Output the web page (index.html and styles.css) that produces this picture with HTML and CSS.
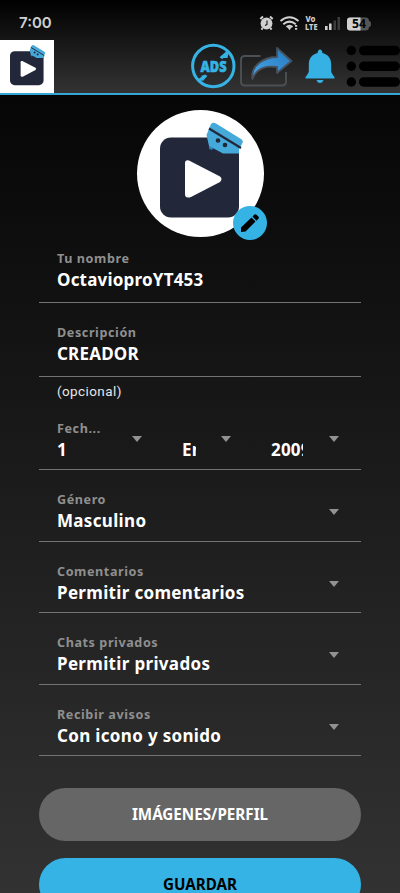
FILE: index.html
```html
<!DOCTYPE html>
<html lang="es">
<head>
<meta charset="utf-8">
<meta name="viewport" content="width=device-width, initial-scale=1">
<title>Perfil</title>
<link rel="stylesheet" href="styles.css">
</head>
<body>
<svg class="defs" aria-hidden="true">
  <symbol id="logo" viewBox="0 0 80 94" overflow="visible">
    <rect x="0" y="14.500" width="79" height="80" rx="11" fill="#22273a"/>
    <path d="M25 40.500Q25 36.500 29 37.500L60 53.500Q63 56 60 59L31 74Q25 76 25 71Z" fill="#fff"/>
    <path d="M49 21v5l3 1 2-3z" fill="#2481b5"/>
    <path d="M51 1Q53-1 56 .5L81 16Q84 18 82 21L79 26V30.500H63L49 23 46.500 12Z" fill="#45a9da"/>
    <path d="M49 5.500L81 25" stroke="#22273a" stroke-width="2.200"/>
    <circle cx="58" cy="17.500" r="2.300" fill="#22273a"/><circle cx="65" cy="22" r="2.300" fill="#22273a"/>
  </symbol>
</svg>
<header class="top">
  <div class="status">
    <span class="time">7:00</span>
    <svg class="status-icons" width="114" height="20" viewBox="0 0 114 20">
      <circle cx="8.500" cy="10.500" r="5.900" fill="#d0d0d0"/>
      <path d="M9 7.500v4l-2 1" stroke="#111" stroke-width="1.100" fill="none"/>
      <g fill="none" stroke="#d0d0d0">
        <path d="M2.300 6l2.700-2.500M14.700 6L12 3.500M4.500 15l-1 1.600M12.500 15l1 1.600" stroke-width="2"/>
        <path d="M22.500 8Q31.500 .5 40.500 8M25.300 11.200Q31.500 6 37.700 11.200M28.500 14Q31.500 11.500 34.500 14" stroke-width="2"/>
      </g>
      <path d="M29.300 14h4.400l-2.200 3.200zM37 12h2.200v1.800H37zM37 15h2.200v1.800H37z" fill="#d0d0d0"/>
      <g font-family="Noto Sans" font-weight="800" font-size="8.500" fill="#d0d0d0"><text x="47.500" y="9.300" textLength="10" lengthAdjust="spacingAndGlyphs">Vo</text><text x="47" y="17" textLength="12.500" lengthAdjust="spacingAndGlyphs">LTE</text></g>
      <path d="M67 13h2.600v4H67zM71 10.500h2.600V17H71z" fill="#d0d0d0"/>
      <path d="M75.500 7.500H78V17h-2.500zM79.500 4H82v13h-2.500z" fill="#3c3c3c"/>
      <rect x="89" y="4.500" width="22" height="13" rx="3.500" fill="#555"/><path d="M111 8q2 0 2 3t-2 3z" fill="#555"/>
      <path d="M92 4.500h10.500v13H92q-3 0-3-3v-7q0-3 3-3z" fill="#d0d0d0"/>
      <text x="94" y="15" font-family="Noto Sans" font-weight="700" font-size="11.500" textLength="14" lengthAdjust="spacingAndGlyphs" fill="#050505">54</text>
    </svg>
  </div>
  <nav class="bar">
    <div class="brand"><svg width="34" height="40"><use href="#logo"/></svg></div>
    <svg class="tools" width="210" height="53" viewBox="190 40 210 53">
      <defs><linearGradient id="arrow" x1="0" y1="1" x2="1" y2="0"><stop stop-color="#4ba4e8"/><stop offset="1" stop-color="#2379bd"/></linearGradient></defs>
      <circle cx="213.300" cy="66" r="20.700" fill="none" stroke="#35b3e5" stroke-width="3"/>
      <path d="M199 80.500l7-5M221 58l7-6" stroke="#35b3e5" stroke-width="3"/>
      <path d="M201.500 75.500h6l-5 6zM219.500 58l5-4.500h4l-1 4.500z" fill="#35b3e5"/>
      <text x="200.500" y="71.500" font-family="Noto Sans" font-weight="900" font-size="15" textLength="26" lengthAdjust="spacingAndGlyphs" fill="#35b3e5" stroke="#35b3e5" stroke-width=".6">ADS</text>
      <path d="M260.500 56H245q-4 0-4 4v21.500q0 4 4 4h37q4 0 4-4V72" fill="none" stroke="#4b5055" stroke-width="1.900"/>
      <path d="M252.500 79C250 65 265 57 277 57V48L291.500 61 277 73V67C267 66 257 67 252.500 79Z" fill="url(#arrow)" stroke="#46515d" stroke-width="1.800" stroke-linejoin="round"/>
      <path d="M317.500 53q.5-3.500 2.500-3.500t2.500 3.500c6 1.500 8.700 6 8.700 11.500v6.500q0 2 3.300 6v1.500h-29v-1.500q3.300-4 3.300-6v-6.500c0-5.500 2.700-10 8.700-11.500zM316.500 80h7q-1 3-3.500 3t-3.500-3z" fill="#35b1e4"/>
      <g fill="#000"><circle cx="351.300" cy="50.500" r="4.700"/><circle cx="351.300" cy="66.300" r="4.700"/><circle cx="351.300" cy="82" r="4.700"/><rect x="359" y="45.800" width="41" height="9.500" rx="4.700"/><rect x="359" y="61.500" width="41" height="9.500" rx="4.700"/><rect x="359" y="77.200" width="41" height="9.500" rx="4.700"/></g>
    </svg>
  </nav>
</header>
<main class="page">
  <div class="avatar">
    <svg width="80" height="94"><use href="#logo"/></svg>
    <span class="edit"><svg width="34" height="34" viewBox="0 0 34 34"><path d="M8 21.500L18.500 11.500l4 4L12.500 25.500 8 26zM19.500 10.500l2-2q1-.7 2 .3l2 2q.8 1-.1 1.900l-2 2z"/></svg></span>
  </div>
  <form class="form">
    <div class="field input"><span class="label">Tu nombre</span><span class="value">OctavioproYT453</span></div>
    <div class="field input second"><span class="label">Descripción</span><span class="value">CREADOR</span></div>
    <div class="hint">(opcional)</div>
    <div class="field date"><span class="label">Fech...</span>
      <div class="parts"><span class="value day">1</span><i class="caret"></i><span class="value month">Enero</span><i class="caret"></i><span class="value year">2009</span><i class="caret"></i></div>
    </div>
    <div class="field select"><div><span class="label">Género</span><span class="value">Masculino</span></div><i class="caret"></i></div>
    <div class="field select"><div><span class="label">Comentarios</span><span class="value">Permitir comentarios</span></div><i class="caret"></i></div>
    <div class="field select"><div><span class="label">Chats privados</span><span class="value">Permitir privados</span></div><i class="caret"></i></div>
    <div class="field select"><div><span class="label">Recibir avisos</span><span class="value">Con icono y sonido</span></div><i class="caret"></i></div>
    <button class="button" type="button">IMÁGENES/PERFIL</button>
    <button class="button save" type="button">GUARDAR</button>
  </form>
</main>
</body>
</html>
```
FILE: styles.css
```css
* { box-sizing: border-box; }
body { margin: 0; height: 893px; overflow: hidden; background: #303030; color: #fff; font-family: "Noto Sans", sans-serif; }
svg { display: block; overflow: visible; }
.defs { position: absolute; width: 0; height: 0; }
.top { height: 95px; background: linear-gradient(#000, #333); border-bottom: 2px solid #35a6d6; }
.status { height: 40px; display: flex; justify-content: space-between; padding: 12.500px 28px 0 19px; }
.time { font: 600 15px/20px Inter, sans-serif; color: #d0d0d0; letter-spacing: 0; }
.bar { display: flex; justify-content: space-between; height: 53px; }
.brand { width: 53.500px; height: 53px; background: #fff; padding: 5px 10px; }
.page { height: 798px; background: linear-gradient(#060606, #323232); padding: 14.500px 39px 0; }
.avatar { position: relative; width: 127px; height: 127px; margin: 0 auto; border-radius: 50%; background: #fff; padding: 13.500px 0 0 23px; }
.edit { position: absolute; left: 96px; top: 96.500px; width: 34px; height: 34px; border-radius: 50%; background: #35b3e5; }
.field { height: 71.500px; padding: 21px 18px 0; border-bottom: 1px solid #737373; }
.input { height: 66px; padding-top: 13.500px; }
.second { height: 74px; padding-top: 21px; }
.label, .value { display: block; white-space: nowrap; }
.label { font-size: 12.600px; font-weight: 700; line-height: 18px; letter-spacing: .58px; color: #8f8f8f; }
.value { font-size: 17px; font-weight: 700; line-height: 24px; letter-spacing: .2px; }
.select .value { letter-spacing: .33px; }
.hint { height: 22px; padding: 4px 18px 0; font: 13.500px/20px Roboto, sans-serif; letter-spacing: .4px; color: #e6e6e6; }
.caret { width: 0; height: 0; border: 5.500px solid transparent; border-top: 6px solid #929292; border-bottom: 0; }
.select { display: flex; justify-content: space-between; }
.select .caret { margin-top: 18px; margin-right: 4px; }
.date { padding-top: 21px; }
.parts { display: grid; grid-template-columns: 75px 50px 39px 50px 58px 11px; align-items: start; }
.parts .caret { margin-top: -2px; }
.parts .value { margin-top: 0; overflow: hidden; }
.month { width: 14px; }
.year { width: 32px; }
.button { display: block; width: 100%; height: 53px; margin-top: 32px; padding: 0; border: 0; border-radius: 27px; background: #666; color: #fff; font: 700 15.200px/53px "Noto Sans", sans-serif; }
.save { margin-top: 17px; background: #35b3e5; color: #000; }
```
